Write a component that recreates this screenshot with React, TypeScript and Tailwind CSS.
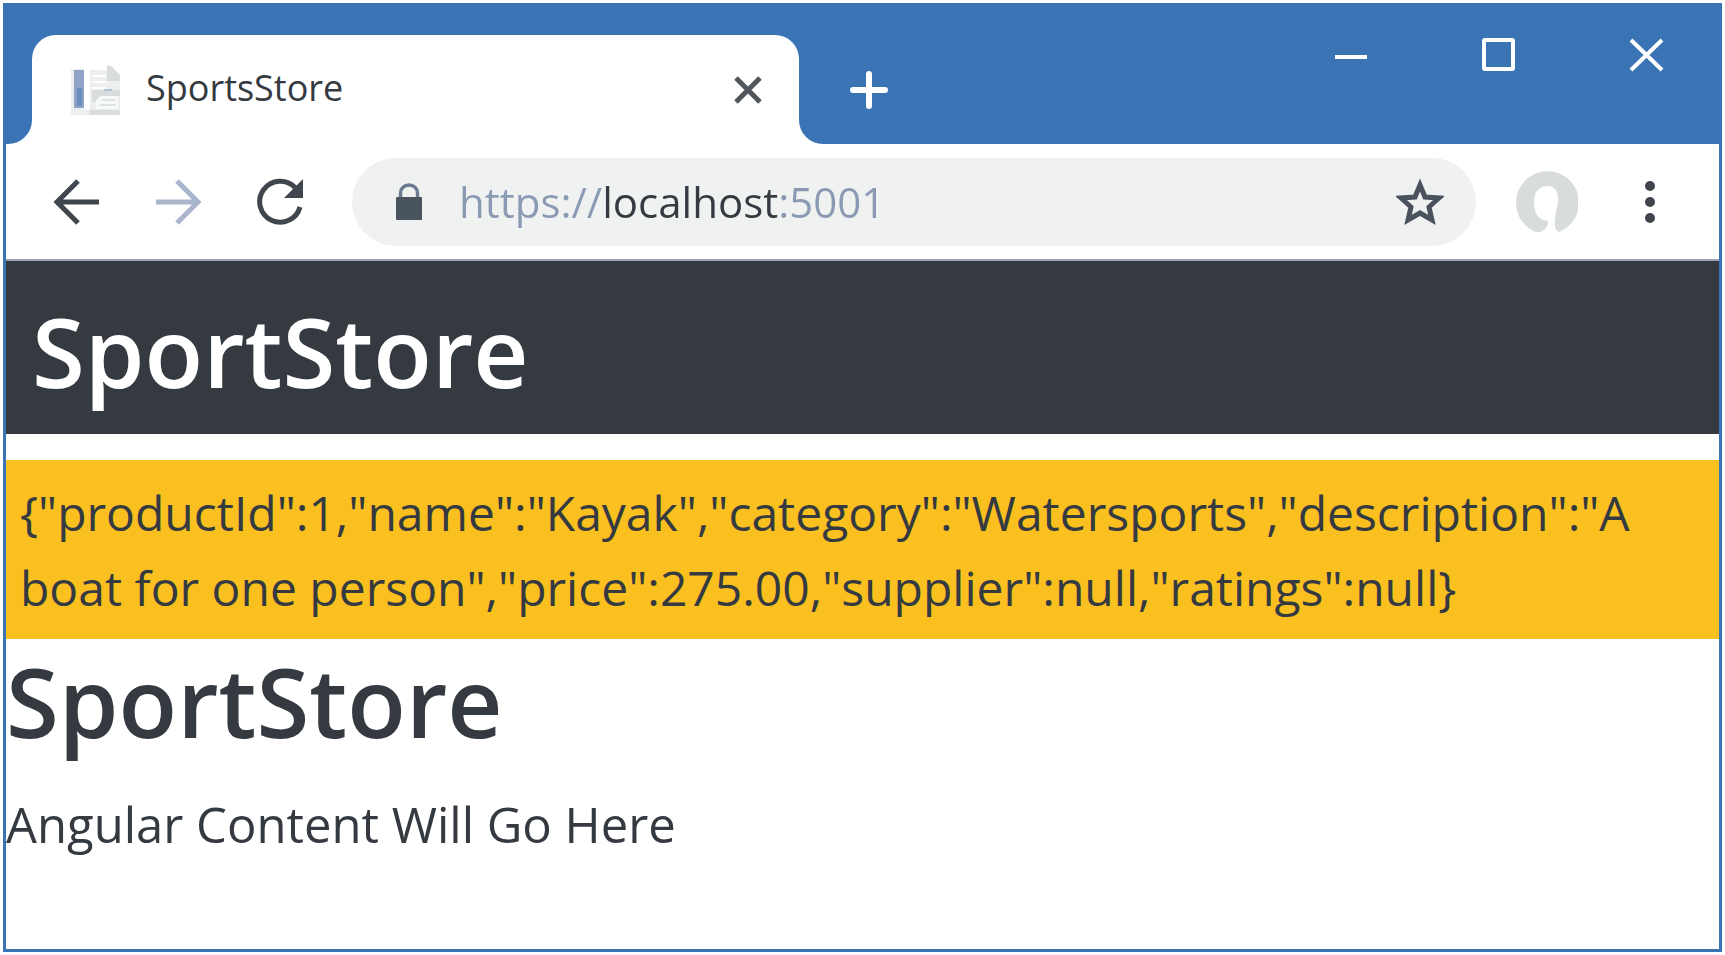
import React from "react";

const product =
  '{"productId":1,"name":"Kayak","category":"Watersports","description":"A boat for one person","price":275.00,"supplier":null,"ratings":null}';

function TitleBar() {
  return (
    <header className="flex h-[141px] items-end bg-[#3a74b5]">
      <div className="relative ml-[26px] flex h-[109px] w-[767px] shrink-0 items-center rounded-t-[24px] bg-white pl-[38px] pr-[37px]">
        <svg className="absolute -left-[24px] bottom-0 size-[24px]" viewBox="0 0 24 24" aria-hidden="true">
          <path d="M24 0v24H0A24 24 0 0 0 24 0z" fill="#fff" />
        </svg>
        <svg className="absolute -right-[24px] bottom-0 size-[24px]" viewBox="0 0 24 24" aria-hidden="true">
          <path d="M0 0v24h24A24 24 0 0 1 0 0z" fill="#fff" />
        </svg>
        <svg className="size-[52px] shrink-0" viewBox="0 0 52 52" aria-hidden="true">
          <path d="M1 5h13v40h7v6H1z" fill="#eceeef" />
          <path d="M20 6h18l12 10v35H20z" fill="#eceeef" />
          <path d="M22 12h14M22 18h14M22 24h14" stroke="#fff" strokeWidth="2" />
          <path d="M37 1l4 1 9 9v6H37z" fill="#d9dcdd" />
          <path d="M22 26h28v6H30l-3 6h-5z" fill="#dadddd" />
          <path d="M34 26h8" stroke="#b4c2d6" strokeWidth="2" />
          <path d="M26 45V36l5-4h17v13z" fill="#f7f8f8" />
          <path d="M32 36h13M30 41h16" stroke="#dfe2e3" strokeWidth="2" />
          <path d="M20 46h30v5H20z" fill="#dadddd" />
          <path d="M4 6h10v38H4z" fill="#8fa4c6" />
          <path d="M7 24h5v18H7z" fill="#6a8dc0" />
        </svg>
        <span className="mb-[4px] ml-[24px] flex-1 text-[36px] leading-[52px] text-[#343a40]">SportsStore</span>
        <button aria-label="Close tab" className="shrink-0">
          <svg className="size-[28px]" viewBox="0 0 28 28" fill="none" stroke="#50565c" strokeWidth="5">
            <path d="M2 2l24 24M26 2L2 26" />
          </svg>
        </button>
      </div>
      <button aria-label="New tab" className="mb-[34px] ml-[50px] shrink-0">
        <svg className="size-[40px]" viewBox="0 0 40 40" fill="none" stroke="#fff" strokeWidth="6" strokeLinecap="round">
          <path d="M20 4v32M4 20h32" />
        </svg>
      </button>
      <div className="mb-[71px] ml-auto mr-[54px] flex gap-[112px]">
        <button aria-label="Minimize">
          <svg className="size-[36px]" viewBox="0 0 36 36" fill="none" stroke="#fff" strokeWidth="4">
            <path d="M2 20h32" />
          </svg>
        </button>
        <button aria-label="Maximize">
          <svg className="size-[36px]" viewBox="0 0 36 36" fill="none" stroke="#fff" strokeWidth="4">
            <rect x="3" y="3" width="29" height="29" rx="1" />
          </svg>
        </button>
        <button aria-label="Close window">
          <svg className="size-[36px]" viewBox="0 0 36 36" fill="none" stroke="#fff" strokeWidth="4">
            <path d="M2 3l31 30M33 3L2 33" />
          </svg>
        </button>
      </div>
    </header>
  );
}

function Toolbar() {
  return (
    <nav className="flex h-[117px] items-center border-b-2 border-[#9aa5b1] bg-white pl-[46px] pr-[63px]">
      <div className="flex gap-[54px]">
        <button aria-label="Back">
          <svg className="size-[48px]" viewBox="0 0 48 48" fill="none" stroke="#3f464d" strokeWidth="5">
            <path d="M47 24H6M26 3L5 24l21 21" />
          </svg>
        </button>
        <button aria-label="Forward">
          <svg className="size-[48px]" viewBox="0 0 48 48" fill="none" stroke="#a9b6cb" strokeWidth="5">
            <path d="M2 24h41M23 3l21 21-21 21" />
          </svg>
        </button>
        <button aria-label="Reload">
          <svg className="size-[48px]" viewBox="0 0 48 48" fill="none">
            <path d="M44 29A20.500 20.500 0 1 1 39 9.500" stroke="#3f464d" strokeWidth="5" />
            <path d="M47 1v19H28z" fill="#3f464d" />
          </svg>
        </button>
      </div>
      <div className="ml-[48px] flex h-[88px] flex-1 items-center rounded-full bg-[#f0f2f2] pl-[43px] pr-[32px]">
        <svg className="h-[38px] w-[28px] shrink-0" viewBox="0 0 28 38" fill="none" aria-hidden="true">
          <path d="M5.500 16V10a8.500 8 0 0 1 17 0v6" stroke="#6b7b92" strokeWidth="3.500" />
          <rect x="1" y="14" width="26" height="23" rx="1" fill="#4a545f" />
        </svg>
        <input
          aria-label="Address"
          defaultValue="https://localhost:5001"
          className="ml-[36px] min-w-0 flex-1 bg-[linear-gradient(90deg,#8a9ab3_147px,#343a40_147px,#343a40_322px,#8a9ab3_322px)] bg-clip-text text-[42px] leading-[56px] text-transparent outline-none"
        />
        <button aria-label="Bookmark this page">
          <svg className="size-[48px]" viewBox="0 0 48 48" fill="none" stroke="#4a535d" strokeWidth="5">
            <path d="M24 7l5 12 14 1-10 9 3 13-12-7-12 7 3-13L5 20l14-1z" />
          </svg>
        </button>
      </div>
      <button aria-label="Profile" className="ml-[38px]">
        <svg className="size-[64px]" viewBox="0 0 64 64" fill="#d9dcdd">
          <path d="M22 62A31.500 31.500 0 1 1 45 62c-4-2-5-6-4-14 1-8 3-12 3-19 0-9-4-13-11-13s-13 5-13 16c0 9 3 16 9 18 5 0 6 2 4 6-2 4-6 7-11 6z" />
        </svg>
      </button>
      <button aria-label="Menu" className="ml-[66px]">
        <svg className="h-[48px] w-[12px]" viewBox="0 0 12 48" fill="#3f464d">
          <circle cx="6" cy="8" r="5" />
          <circle cx="6" cy="24" r="5" />
          <circle cx="6" cy="40" r="5" />
        </svg>
      </button>
    </nav>
  );
}

export default function App() {
  return (
    <div className="flex min-h-screen bg-white p-[3px] font-['Open_Sans','Noto_Sans',sans-serif] text-[#343a40]">
      <div className="flex flex-1 flex-col border-[3px] border-t-0 border-[#3a74b5] bg-white">
        <TitleBar />
        <Toolbar />
        <main className="text-[48px] leading-[75px]">
          <div className="bg-[#343a40] px-[26px] pb-[23px] pt-[30px] text-white">
            <h1 className="text-[96px] font-semibold leading-[120px]">SportStore</h1>
          </div>
          <p className="mt-[26px] bg-[#fac020] px-[14px] pb-[14px] pt-[15px]">{product}</p>
          <h2 className="mt-[2px] text-[96px] font-semibold leading-[120px]">SportStore</h2>
          <p className="mt-[26px] text-[49px]">Angular Content Will Go Here</p>
        </main>
      </div>
    </div>
  );
}
